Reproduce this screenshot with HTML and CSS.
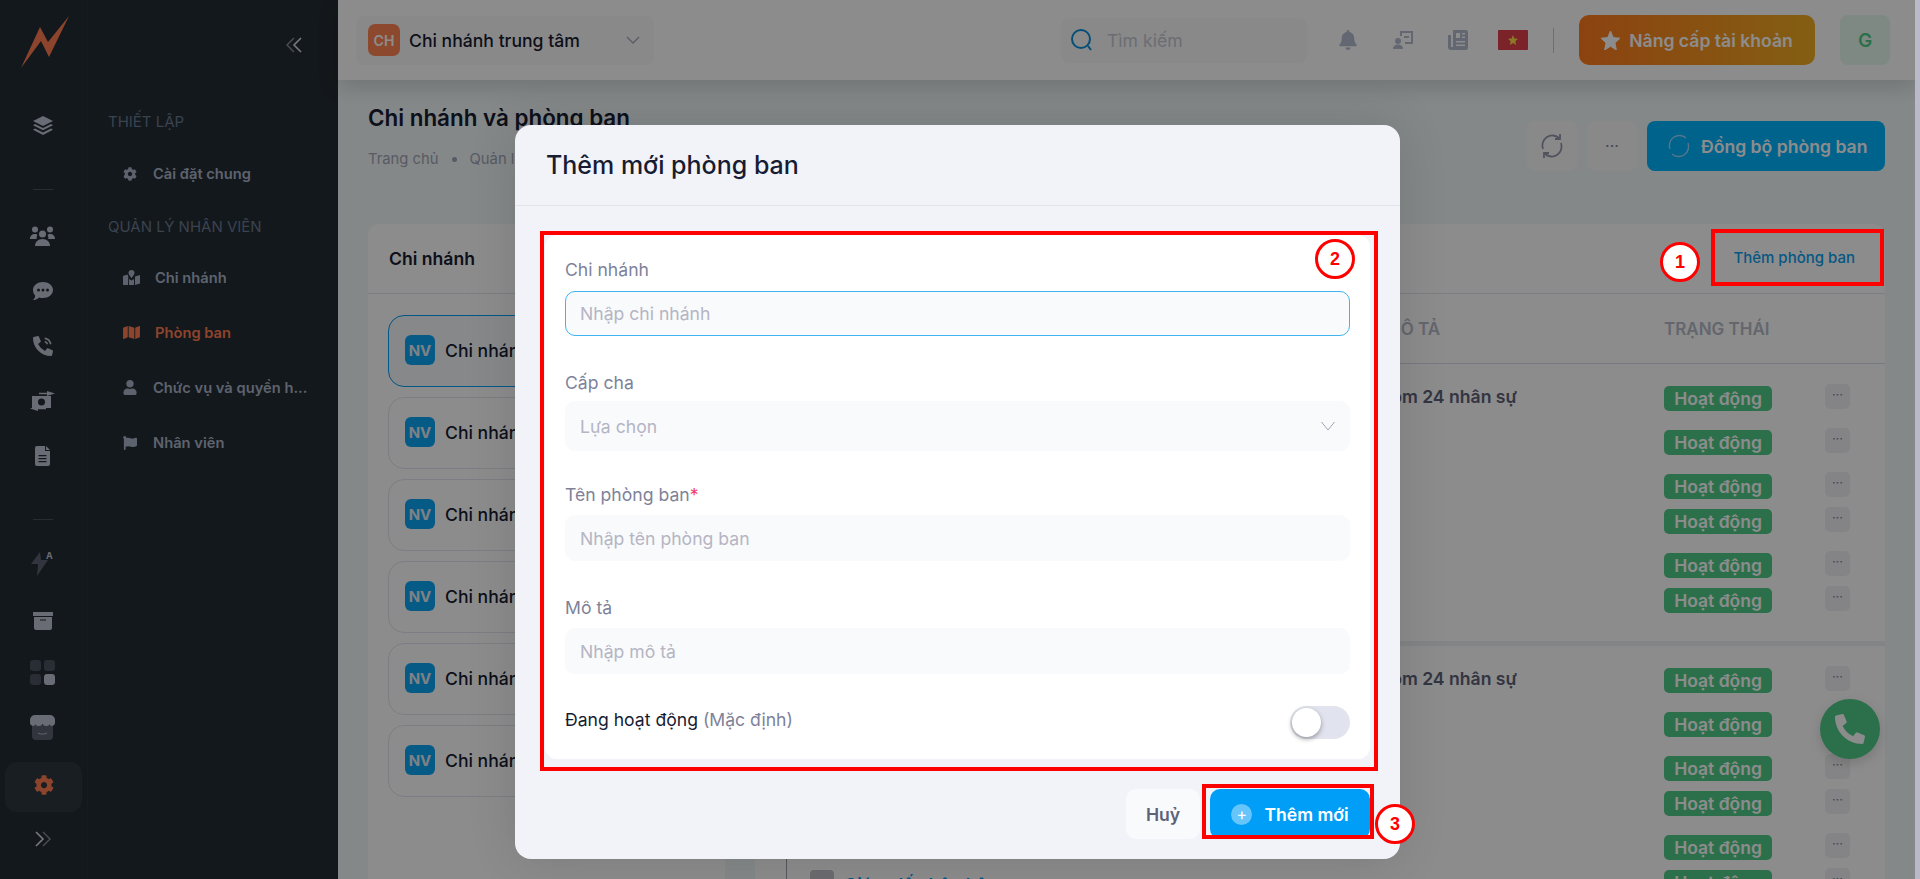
FILE: index.html
```html
<!DOCTYPE html>
<html lang="vi">
<head>
    <meta charset="UTF-8">
    <title>Chi nhánh và phòng ban</title>
    <link rel="stylesheet" href="styles.css">
</head>
<body>
<div class="app">
    <nav class="rail">
        <div class="rail-logo">
            <svg width="50" height="54" viewBox="20 15 50 54"><polygon points="21,68 40,27 48,42 69,16 49,57 41,41" fill="#ff7d52"/></svg>
        </div>
        <div class="rail-item"><svg width="20" height="20" viewBox="0 0 20 20"><path d="M10 0l10 5-10 5L0 5z"/><path d="M2 8l8 4 8-4 2 1.200-10 5-10-5z"/><path d="M2 12.500l8 4 8-4 2 1.200-10 5.300-10-5.300z"/></svg></div>
        <div class="rail-line"></div>
        <div class="rail-item"><svg width="25" height="20" viewBox="0 0 25 20"><circle cx="5" cy="3.500" r="3"/><circle cx="20" cy="3.500" r="3"/><circle cx="12.500" cy="8" r="3.500"/><path d="M0 13c0-3 2-5 5-5 1 0 2 .3 2.500 1-1 1.300-1 2.500-.8 4z"/><path d="M25 13c0-3-2-5-5-5-1 0-2 .3-2.500 1 1 1.300 1 2.500.8 4z"/><path d="M5 20c0-4 3-7 7.500-7s7.500 3 7.500 7z"/></svg></div>
        <div class="rail-item"><svg width="20" height="18" viewBox="0 0 20 18"><path fill-rule="evenodd" d="M10 0c5.500 0 10 3.500 10 8s-4.500 8-10 8c-1.400 0-2.700-.2-3.900-.6C4.700 16.800 2.500 18 0 18c1.400-1.200 2.200-2.900 2.300-4.300C.9 12.300 0 10.300 0 8c0-4.500 4.500-8 10-8zM5.500 6.500a1.500 1.500 0 100 3 1.500 1.500 0 000-3zm4.500 0a1.500 1.500 0 100 3 1.500 1.500 0 000-3zm4.500 0a1.500 1.500 0 100 3 1.500 1.500 0 000-3z"/></svg></div>
        <div class="rail-item"><svg width="20" height="20" viewBox="0 0 512 512"><path d="M497.390 361.800l-112-48a24 24 0 0 0-28 6.900l-49.600 60.600A370.660 370.660 0 0 1 130.600 204.110l60.600-49.600a23.940 23.940 0 0 0 6.900-28l-48-112A24.160 24.160 0 0 0 122.600.610l-104 24A24 24 0 0 0 0 48c0 256.500 207.900 464 464 464a24 24 0 0 0 23.400-18.600l24-104a24.290 24.290 0 0 0-14.010-27.600z"/><path d="M300 40c90 5 165 80 172 170h-42c-7-68-62-122-130-128zM300 125c45 5 82 40 87 85h-44c-4-20-22-38-43-42z"/></svg></div>
        <div class="rail-item"><svg width="25" height="20" viewBox="0 0 25 20"><path fill-rule="evenodd" d="M2 5h19v12H2zM11.500 7.500a3.500 3.500 0 100 7 3.500 3.500 0 000-7z"/><path d="M17 0l8 2.500-8 2.500V3.300H9V1.700h8zM8 15v1.700h8v1.600H8V20l-8-2.500z"/></svg></div>
        <div class="rail-item"><svg width="15" height="20" viewBox="0 0 15 20"><path fill-rule="evenodd" d="M2 0h8v5h5v13a2 2 0 01-2 2H2a2 2 0 01-2-2V2a2 2 0 012-2zM3.500 9v1.300h8V9zm0 3v1.300h8V12zm0 3v1.300h8V15z"/><path d="M11 0l4 4h-4z"/></svg></div>
        <div class="rail-line"></div>
        <div class="rail-item rail-item-bolt"><svg width="24" height="26" viewBox="0 0 24 26"><polygon points="9,2 0,14 7,14 6,26 17,10 10,10" fill="#5c6270"/><text x="15" y="9" class="rail-letter">A</text></svg></div>
        <div class="rail-item rail-item-archive"><svg width="20" height="18" viewBox="0 0 20 18"><rect width="20" height="4" rx=".5"/><path fill-rule="evenodd" d="M1 5h18v11a2 2 0 01-2 2H3a2 2 0 01-2-2zM7 7.500v1h6v-1z"/></svg></div>
        <div class="rail-item rail-item-grid"><svg width="25" height="25" viewBox="0 0 25 25"><rect width="11" height="11" rx="3" fill="#4c5260"/><rect x="14" width="11" height="11" rx="3" fill="#4c5260"/><rect y="14" width="11" height="11" rx="3" fill="#4c5260"/><rect x="14" y="14" width="11" height="11" rx="3"/></svg></div>
        <div class="rail-item rail-item-shop"><svg width="25" height="25" viewBox="0 0 25 25"><path d="M2 10h21v11a4 4 0 01-4 4H6a4 4 0 01-4-4z" fill="#5c6270"/><path d="M5 0h15a5 5 0 015 5v3a3 3 0 01-5.500 1.500A3.800 3.800 0 0116 11a3.800 3.800 0 01-3.500-2 3.800 3.800 0 01-3.500 2 3.800 3.800 0 01-3.500-1.500A3 3 0 010 8V5a5 5 0 015-5z"/><path d="M8 18c2.500 1.500 6.500 1.500 9 0" fill="none" stroke="#aeb4c4" stroke-width="1"/></svg></div>
        <div class="rail-item rail-item-active"><svg class="icon-orange" width="20" height="20" viewBox="0 0 512 512"><path d="M487.400 315.700l-42.600-24.600c4.300-23.200 4.300-47 0-70.200l42.600-24.600c4.900-2.800 7.100-8.600 5.500-14-11.100-35.600-30-67.800-54.700-94.600-3.800-4.100-10-5.100-14.800-2.300L380.800 110c-17.900-15.400-38.500-27.300-60.800-35.100V25.800c0-5.600-3.900-10.500-9.400-11.700-36.700-8.200-74.300-7.800-109.200 0-5.500 1.200-9.400 6.100-9.400 11.700V75c-22.200 7.900-42.800 19.800-60.800 35.100L88.700 85.500c-4.900-2.800-11-1.900-14.800 2.300-24.700 26.700-43.600 58.900-54.700 94.600-1.700 5.400.6 11.200 5.500 14L67.300 221c-4.300 23.200-4.300 47 0 70.200l-42.600 24.600c-4.900 2.800-7.100 8.600-5.500 14 11.100 35.600 30 67.800 54.700 94.600 3.800 4.100 10 5.100 14.800 2.300l42.600-24.600c17.900 15.400 38.500 27.300 60.800 35.100v49.200c0 5.600 3.900 10.500 9.400 11.700 36.700 8.200 74.300 7.800 109.200 0 5.500-1.200 9.400-6.100 9.400-11.700v-49.200c22.200-7.900 42.800-19.800 60.800-35.100l42.600 24.600c4.900 2.800 11 1.900 14.800-2.300 24.700-26.700 43.600-58.900 54.700-94.600 1.500-5.500-.7-11.300-5.600-14.100zM256 336c-44.100 0-80-35.900-80-80s35.900-80 80-80 80 35.900 80 80-35.900 80-80 80z"/></svg></div>
        <div class="rail-expand"><svg width="16" height="16" viewBox="0 0 16 16"><path d="M1 1l7 7-7 7" stroke="#d8dce6" stroke-width="1.600"/><path d="M8 1l7 7-7 7" stroke="#8a8f9a" stroke-width="1.400"/></svg></div>
    </nav>

    <aside class="submenu">
        <div class="submenu-collapse"><svg width="16" height="16" viewBox="0 0 16 16" fill="none"><path d="M8 1L1 8l7 7" stroke="#8a8f9a" stroke-width="1.400"/><path d="M15 1L8 8l7 7" stroke="#d8dce6" stroke-width="1.600"/></svg></div>
        <div class="submenu-title">THIẾT LẬP</div>
        <a class="submenu-item"><svg width="14" height="14" viewBox="0 0 512 512"><path d="M487.400 315.700l-42.600-24.600c4.300-23.200 4.300-47 0-70.200l42.600-24.600c4.900-2.800 7.100-8.600 5.500-14-11.100-35.600-30-67.800-54.700-94.600-3.800-4.100-10-5.100-14.800-2.300L380.800 110c-17.900-15.400-38.500-27.300-60.800-35.100V25.800c0-5.600-3.900-10.500-9.400-11.700-36.700-8.200-74.300-7.800-109.200 0-5.500 1.200-9.400 6.100-9.400 11.700V75c-22.200 7.900-42.800 19.800-60.800 35.100L88.700 85.500c-4.900-2.800-11-1.900-14.800 2.300-24.700 26.700-43.600 58.900-54.700 94.600-1.700 5.400.6 11.200 5.500 14L67.300 221c-4.300 23.200-4.300 47 0 70.200l-42.600 24.600c-4.900 2.800-7.100 8.600-5.500 14 11.100 35.600 30 67.800 54.700 94.600 3.800 4.100 10 5.100 14.800 2.300l42.600-24.600c17.900 15.400 38.500 27.300 60.800 35.100v49.200c0 5.600 3.900 10.500 9.400 11.700 36.700 8.200 74.300 7.800 109.200 0 5.500-1.200 9.400-6.100 9.400-11.700v-49.200c22.200-7.900 42.800-19.800 60.800-35.100l42.600 24.600c4.900 2.800 11 1.900 14.800-2.300 24.700-26.700 43.600-58.900 54.700-94.600 1.500-5.500-.7-11.300-5.600-14.100zM256 336c-44.100 0-80-35.900-80-80s35.900-80 80-80 80 35.900 80 80-35.900 80-80 80z"/></svg>Cài đặt chung</a>
        <div class="submenu-title submenu-title-second">QUẢN LÝ NHÂN VIÊN</div>
        <a class="submenu-item submenu-item-wide"><svg width="17" height="15" viewBox="0 0 17 15"><path d="M8.500 0a3 3 0 013 3c0 1.500-2 4-3 5.200C7.500 7 5.500 4.500 5.500 3a3 3 0 013-3z"/><path d="M0 6l4.500-1.500.8 2L5 15l-5 0zM6 9l2.500 1.500L11 9v6H6zM12 6.500l5-1.500v8.500L12 15z"/></svg>Chi nhánh</a>
        <a class="submenu-item submenu-item-wide submenu-item-active"><svg width="17" height="15" viewBox="0 0 576 512"><path d="M0 117.660v346.320c0 11.320 11.430 19.060 21.940 14.860L160 416V32L20.120 87.950A32.006 32.006 0 0 0 0 117.660zM192 416l192 64V96L192 32v384zM554.060 33.160L416 96v384l139.880-55.950A31.996 31.996 0 0 0 576 394.340V48.020c0-11.320-11.430-19.060-21.940-14.860z"/></svg>Phòng ban</a>
        <a class="submenu-item"><svg width="14" height="15" viewBox="0 0 448 512"><path d="M224 256c70.700 0 128-57.300 128-128S294.700 0 224 0 96 57.300 96 128s57.300 128 128 128zm89.600 32h-16.700c-22.200 10.200-46.900 16-72.900 16s-50.600-5.800-72.900-16h-16.700C60.200 288 0 348.200 0 422.400V464c0 26.500 21.500 48 48 48h352c26.500 0 48-21.500 48-48v-41.600c0-74.200-60.200-134.400-134.400-134.400z"/></svg>Chức vụ và quyền h...</a>
        <a class="submenu-item"><svg width="14" height="14" viewBox="0 0 512 512"><path d="M349.565 98.783C295.978 98.783 251.721 64 184.348 64c-24.955 0-47.309 4.384-68.045 12.013a55.947 55.947 0 0 0 3.586-23.562C118.117 24.015 94.806 1.206 66.338.048 34.345-1.254 8 24.296 8 56c0 19.026 9.497 35.825 24 45.945V488c0 13.255 10.745 24 24 24h16c13.255 0 24-10.745 24-24v-94.400c28.311-12.064 63.582-22.122 114.435-22.122 53.588 0 97.844 34.783 165.217 34.783 48.169 0 86.667-16.294 122.505-40.858C506.840 359.452 512 349.571 512 339.045v-243.100c0-23.393-24.269-38.870-45.485-29.016-34.338 15.948-76.454 31.854-116.950 31.854z"/></svg>Nhân viên</a>
    </aside>

    <div class="page">
        <header class="topbar">
            <div class="branch-select">
                <span class="branch-logo">CH</span>
                <span class="branch-name">Chi nhánh trung tâm</span>
                <svg class="branch-caret" width="14" height="8" viewBox="0 0 14 8" fill="none"><path d="M1 1l6 6 6-6" stroke="#a1a5b7" stroke-width="1.300"/></svg>
            </div>
            <div class="search">
                <svg width="24" height="24" viewBox="0 0 24 24" fill="none"><circle cx="11" cy="11" r="9" stroke="#0d8fd8" stroke-width="2"/><path d="M18 18l3 4" stroke="#0d8fd8" stroke-width="2"/></svg>
                <span>Tìm kiếm</span>
            </div>
            <span class="top-icon"><svg width="18" height="20" viewBox="0 0 448 512"><path d="M224 512c35.320 0 63.970-28.650 63.970-64H160.030c0 35.350 28.650 64 63.970 64zm215.390-149.710c-19.320-20.760-55.470-51.990-55.470-154.290 0-77.700-54.480-139.900-127.940-155.160V32c0-17.670-14.320-32-31.980-32s-31.980 14.330-31.980 32v20.840C118.560 68.100 64.080 130.300 64.080 208c0 102.300-36.150 133.530-55.470 154.290-6 6.450-8.660 14.160-8.610 21.710.11 16.400 12.980 32 32.100 32h383.800c19.120 0 32-15.600 32.100-32 .05-7.550-2.610-15.270-8.610-21.710z"/></svg></span>
            <span class="top-icon"><svg width="20" height="18" viewBox="0 0 20 18"><path fill-rule="evenodd" d="M7 0h13v13h-8v-2h6V2H9v3H7z"/><circle cx="5" cy="10" r="3"/><path d="M0 18c0-3 2-4.500 5-4.500s5 1.500 5 4.500zM11 5h5v2h-5z"/></svg></span>
            <span class="top-icon"><svg width="20" height="20" viewBox="0 0 20 20"><path fill-rule="evenodd" d="M5 0h13a2 2 0 012 2v16a2 2 0 01-2 2H3a3 3 0 01-3-3V5h3v12h2zM8 3v5h4V3zm6 0v1.500h3V3zm0 3.500V8h3V6.500zM8 11v1.500h9V11zm0 3.500V16h9v-1.500z"/></svg></span>
            <span class="flag"><svg width="10" height="10" viewBox="0 0 20 20"><polygon points="10,0 12.900,6.900 20,7.600 14.700,12.500 16.200,20 10,16.100 3.800,20 5.300,12.500 0,7.600 7.100,6.900" fill="#ffda44"/></svg></span>
            <span class="top-divider"></span>
            <button class="upgrade-btn"><svg width="19" height="19" viewBox="0 0 20 20"><polygon points="10,0 12.900,6.900 20,7.600 14.700,12.500 16.200,20 10,16.100 3.800,20 5.300,12.500 0,7.600 7.100,6.900" fill="#fff" stroke="#fff" stroke-linejoin="round"/></svg>Nâng cấp tài khoản</button>
            <span class="user-avatar">G</span>
        </header>

        <main class="content">
            <div class="toolbar">
                <div>
                    <h1 class="page-title">Chi nhánh và phòng ban</h1>
                    <div class="crumbs"><span>Trang chủ</span><i></i><span>Quản lý nhân viên</span></div>
                </div>
                <div class="toolbar-actions">
                    <button class="square-btn"><svg width="24" height="26" viewBox="0 0 24 26" fill="none" stroke="#9297ab" stroke-width="1.800"><path d="M3 16A10 10 0 0 1 19 5"/><path d="M21 10A10 10 0 0 1 5 21"/><path d="M15 6l5 0 0-5M9 20l-5 0 0 5"/></svg></button>
                    <button class="square-btn"><span class="dots">···</span></button>
                    <button class="sync-btn"><svg width="24" height="26" viewBox="0 0 24 26" fill="none" stroke="#9ad8ff" stroke-width="1.400"><path d="M3 16A10 10 0 0 1 19 5"/><path d="M21 10A10 10 0 0 1 5 21"/></svg>Đồng bộ phòng ban</button>
                </div>
            </div>

            <div class="columns">
                <section class="branch-card">
                    <div class="branch-card-head">Chi nhánh</div>
                    <div class="branch-list">
                        <div class="branch-item branch-item-active"><span class="nv">NV</span>Chi nhánh Hà Nội</div>
                        <div class="branch-item"><span class="nv">NV</span>Chi nhánh Hải Phòng</div>
                        <div class="branch-item"><span class="nv">NV</span>Chi nhánh Đà Nẵng</div>
                        <div class="branch-item"><span class="nv">NV</span>Chi nhánh Huế</div>
                        <div class="branch-item"><span class="nv">NV</span>Chi nhánh Cần Thơ</div>
                        <div class="branch-item"><span class="nv">NV</span>Chi nhánh Sài Gòn</div>
                    </div>
                </section>

                <section class="dept-card">
                    <div class="dept-card-head"><a class="add-dept">Thêm phòng ban</a></div>
                    <div class="dept-row dept-head">
                        <span>TÊN PHÒNG BAN</span><span class="head-desc">MÔ TẢ</span><span>TRẠNG THÁI</span>
                    </div>
                    <div class="dept-group">
                        <div class="dept-row"><span></span><span class="desc">Gồm 24 nhân sự</span><span class="badge">Hoạt động</span><span class="more">···</span></div>
                        <div class="dept-row"><span></span><span></span><span class="badge">Hoạt động</span><span class="more">···</span></div>
                        <div class="dept-row dept-row-tight"><span></span><span></span><span class="badge">Hoạt động</span><span class="more">···</span></div>
                        <div class="dept-row"><span></span><span></span><span class="badge">Hoạt động</span><span class="more">···</span></div>
                        <div class="dept-row dept-row-tight"><span></span><span></span><span class="badge">Hoạt động</span><span class="more">···</span></div>
                        <div class="dept-row"><span></span><span></span><span class="badge">Hoạt động</span><span class="more">···</span></div>
                    </div>
                    <div class="dept-group">
                        <div class="dept-row"><span></span><span class="desc">Gồm 24 nhân sự</span><span class="badge">Hoạt động</span><span class="more">···</span></div>
                        <div class="dept-row"><span></span><span></span><span class="badge">Hoạt động</span><span class="more">···</span></div>
                        <div class="dept-row dept-row-tight"><span></span><span></span><span class="badge">Hoạt động</span><span class="more">···</span></div>
                        <div class="dept-row"><span></span><span></span><span class="badge">Hoạt động</span><span class="more">···</span></div>
                        <div class="dept-row dept-row-tight"><span></span><span></span><span class="badge">Hoạt động</span><span class="more">···</span></div>
                        <div class="dept-row"><span class="tree-node"><i></i>Giám đốc bộ phận</span><span></span><span class="badge">Hoạt động</span><span class="more">···</span></div>
                    </div>
                </section>
            </div>
        </main>

        <a class="call-fab"><svg width="30" height="30" viewBox="0 0 512 512"><path d="M497.390 361.800l-112-48a24 24 0 0 0-28 6.900l-49.600 60.600A370.660 370.660 0 0 1 130.600 204.110l60.600-49.600a23.940 23.940 0 0 0 6.900-28l-48-112A24.160 24.160 0 0 0 122.600.610l-104 24A24 24 0 0 0 0 48c0 256.500 207.900 464 464 464a24 24 0 0 0 23.400-18.600l24-104a24.290 24.290 0 0 0-14.010-27.600z"/></svg></a>
    </div>
    <div class="scroll-strip"></div>
</div>

<div class="overlay">
    <div class="modal">
        <div class="modal-head">Thêm mới phòng ban</div>
        <div class="modal-body">
            <form class="modal-form">
                <div class="field">
                    <label>Chi nhánh</label>
                    <input class="input input-focus" type="text" placeholder="Nhập chi nhánh">
                </div>
                <div class="field">
                    <label>Cấp cha</label>
                    <div class="input select">Lựa chọn<svg width="14" height="10" viewBox="0 0 14 10" fill="none"><path d="M.5 1L7 9l6.500-8" stroke="#a1a5b7"/></svg></div>
                </div>
                <div class="field">
                    <label>Tên phòng ban<b>*</b></label>
                    <input class="input" type="text" placeholder="Nhập tên phòng ban">
                </div>
                <div class="field">
                    <label>Mô tả</label>
                    <input class="input" type="text" placeholder="Nhập mô tả">
                </div>
                <div class="toggle-row">
                    <span class="toggle-text">Đang hoạt động <em>(Mặc định)</em></span>
                    <span class="toggle"><i></i></span>
                </div>
            </form>
        </div>
        <div class="modal-foot">
            <button class="btn-cancel">Huỷ</button>
            <button class="btn-add"><span class="plus">+</span>Thêm mới</button>
        </div>
    </div>
</div>

<div class="marker marker-box box-one"></div>
<div class="marker marker-box box-two"></div>
<div class="marker marker-box box-three"></div>
<div class="marker marker-num num-one">1</div>
<div class="marker marker-num num-two">2</div>
<div class="marker marker-num num-three">3</div>
</body>
</html>
```

FILE: styles.css
```css
* {
    box-sizing: border-box;
}
html, body {
    margin: 0;
    height: 100%;
    overflow: hidden;
}
body {
    font-family: 'Inter', 'Noto Sans', sans-serif;
    font-size: 14px;
    color: #181c32;
    background: #f2f8f8;
}
button {
    font-family: inherit;
    border: none;
    cursor: pointer;
}
.app {
    display: flex;
    height: 100vh;
}

/* rail */
.rail {
    width: 88px;
    flex: none;
    background: #242c33;
    border-right: 1px solid #2a3239;
    position: relative;
}
.rail svg {
    fill: #bfc5d4;
    display: block;
}
.rail-logo {
    height: 98px;
    padding: 15px 0 0 20px;
}
.rail-item {
    height: 55px;
    display: flex;
    align-items: center;
    justify-content: center;
    padding-right: 2px;
}
.rail-line {
    width: 20px;
    height: 1px;
    background: #4a535c;
    margin: 36px 0 18px 33px;
}
.rail-letter {
    font-size: 9px;
    font-weight: 700;
    fill: #bfc5d4;
}
.rail-item-bolt {
    margin-top: -3px;
}
.rail-item-archive {
    margin-top: 3px;
    margin-bottom: -3px;
}
.rail-item-active {
    width: 77px;
    height: 50px;
    margin: 7px 0 0 5px;
    padding: 0 0 4px;
    background: #2f373f;
    border-radius: 12px;
}
.rail .icon-orange {
    fill: #ff7d52;
}
.rail-expand {
    margin: 19px 0 0 35px;
}
.rail .rail-expand svg {
    fill: none;
}

/* submenu */
.submenu {
    width: 250px;
    flex: none;
    background: #242c33;
    padding-left: 20px;
    position: relative;
}
.submenu-collapse {
    position: absolute;
    left: 198px;
    top: 37px;
}
.submenu-title {
    color: #6a7a90;
    font-size: 15px;
    line-height: 18px;
    margin-top: 113px;
}
.submenu-title-second {
    margin-top: 17px;
    margin-bottom: -1px;
}
.submenu-item {
    height: 55px;
    display: flex;
    align-items: center;
    gap: 16px;
    padding-left: 15px;
    color: #aab4c8;
    font-size: 14.700px;
    font-weight: 600;
    white-space: nowrap;
}
.submenu-item svg {
    fill: #aab4c8;
    flex: none;
}
.submenu-item-wide {
    gap: 15px;
}
.submenu-item-active {
    color: #ff7d52;
}
.submenu-item-active svg {
    fill: #ff7d52;
}
.submenu-title + .submenu-item {
    margin-top: 15px;
}

/* page */
.page {
    flex: 1;
    min-width: 0;
    position: relative;
    background: #f2f8f8;
}
.scroll-strip {
    width: 5px;
    flex: none;
    background: #b9b9c9;
    position: relative;
    z-index: 30;
}
.topbar {
    height: 80px;
    background: #fff;
    display: flex;
    align-items: center;
    padding: 0 25px 0 18px;
    box-shadow: 0 8px 20px rgba(0, 0, 0, .14);
    position: relative;
}
.branch-select {
    width: 298px;
    height: 49px;
    display: flex;
    align-items: center;
    padding: 0 14px 0 12px;
    background: #fafafa;
    border-radius: 8px;
    margin-right: auto;
}
.branch-logo {
    width: 32px;
    height: 32px;
    display: flex;
    align-items: center;
    justify-content: center;
    background: #ff8555;
    color: #fff;
    border-radius: 7px;
    font-size: 14px;
    font-weight: 600;
}
.branch-name {
    margin-left: 9px;
    font-size: 17.600px;
    font-weight: 500;
    white-space: nowrap;
}
.branch-caret {
    margin-left: auto;
}
.search {
    width: 246px;
    height: 45px;
    background: #fafafa;
    border-radius: 8px;
    display: flex;
    align-items: center;
    gap: 13px;
    padding-left: 9px;
    color: #c4c7d2;
    font-size: 17.600px;
    margin-right: 26px;
}
.top-icon {
    width: 30px;
    display: flex;
    justify-content: center;
    margin-right: 25px;
}
.top-icon svg {
    fill: #b5bccf;
}
.flag {
    width: 30px;
    height: 20px;
    background: #e0404a;
    border-radius: 1px;
    display: flex;
    align-items: center;
    justify-content: center;
}
.top-divider {
    width: 1px;
    height: 25px;
    background: #c9cbd2;
    margin: 0 25px;
}
.upgrade-btn {
    width: 236px;
    height: 50px;
    display: flex;
    align-items: center;
    justify-content: center;
    gap: 9px;
    color: #fff;
    font-size: 17.600px;
    font-weight: 600;
    border-radius: 10px;
    background: linear-gradient(90deg, #ff7a1e, #f0ac22);
    margin-right: 25px;
    white-space: nowrap;
}
.user-avatar {
    width: 50px;
    height: 50px;
    display: flex;
    align-items: center;
    justify-content: center;
    background: #e8f9ee;
    color: #50cd89;
    font-size: 19px;
    font-weight: 600;
    border-radius: 8px;
}

/* content */
.content {
    padding: 24px 30px 0;
}
.toolbar {
    height: 67px;
    display: flex;
    justify-content: space-between;
}
.page-title {
    margin: 0;
    font-size: 22.400px;
    line-height: 28px;
    font-weight: 600;
    color: #181c32;
}
.crumbs {
    margin-top: 18px;
    display: flex;
    align-items: center;
    gap: 13px;
    font-size: 14.800px;
    color: #a1a5b7;
}
.crumbs i {
    width: 5px;
    height: 5px;
    border-radius: 50%;
    background: #a1a5b7;
}
.toolbar-actions {
    align-self: flex-end;
    display: flex;
    gap: 10px;
}
.square-btn {
    width: 50px;
    height: 50px;
    background: #fafafa;
    border-radius: 8px;
    display: flex;
    align-items: center;
    justify-content: center;
}
.dots {
    color: #7e8299;
    font-size: 16px;
}
.sync-btn {
    width: 238px;
    height: 50px;
    display: flex;
    align-items: center;
    gap: 10px;
    padding-left: 20px;
    background: #00b4ff;
    color: #fff;
    font-size: 17.600px;
    font-weight: 600;
    border-radius: 8px;
    white-space: nowrap;
}
.columns {
    margin-top: 53px;
    display: flex;
    gap: 30px;
}
.branch-card {
    width: 357px;
    flex: none;
    height: 800px;
    background: #fff;
    border-radius: 12px 12px 0 0;
}
.branch-card-head {
    height: 70px;
    display: flex;
    align-items: center;
    padding-left: 21px;
    font-size: 17.600px;
    font-weight: 600;
    border-bottom: 1px solid #e4e6ef;
}
.branch-list {
    padding: 21px 20px;
    display: flex;
    flex-direction: column;
    gap: 10px;
}
.branch-item {
    height: 72px;
    display: flex;
    align-items: center;
    gap: 10px;
    padding-left: 16px;
    padding-bottom: 2px;
    border: 1px solid #e4e6ef;
    border-radius: 16px;
    font-size: 17.600px;
    font-weight: 500;
    white-space: nowrap;
    overflow: hidden;
}
.branch-item-active {
    border-color: #009ef7;
    background: #f5f8fc;
}
.nv {
    width: 30px;
    height: 30px;
    flex: none;
    display: flex;
    align-items: center;
    justify-content: center;
    background: #0ba4f5;
    color: #e6edf2;
    border-radius: 6px;
    font-size: 15px;
    font-weight: 700;
}
.dept-card {
    flex: 1;
    min-width: 0;
    height: 800px;
    background: #fff;
    border-radius: 12px 12px 0 0;
}
.dept-card-head {
    height: 70px;
    display: flex;
    align-items: center;
    justify-content: flex-end;
    padding: 0 30px 2px 0;
    border-bottom: 1px solid #e4e6ef;
}
.add-dept {
    color: #0b9ff0;
    font-size: 15px;
    font-weight: 500;
}
.dept-row {
    height: 44px;
    display: grid;
    grid-template-columns: 623px 286px 161px 25px;
    align-items: start;
}
.dept-row-tight {
    height: 35px;
}
.dept-head {
    height: 70px;
    align-items: center;
    font-size: 17px;
    font-weight: 600;
    color: #b6bac8;
    border-bottom: 1px solid #d8dde6;
}
.head-desc {
    margin-left: 7px;
}
.dept-group {
    height: 282px;
    padding-top: 22px;
    border-bottom: 5px solid #eef1f3;
}
.desc {
    color: #5e6278;
    font-size: 17.600px;
    font-weight: 600;
    line-height: 22px;
    white-space: nowrap;
}
.badge {
    width: 108px;
    height: 25px;
    display: flex;
    align-items: center;
    justify-content: center;
    background: #50cd89;
    color: #fff;
    border-radius: 5px;
    font-size: 17.500px;
    font-weight: 600;
}
.more {
    width: 25px;
    height: 25px;
    margin-top: -2px;
    background: #f1f1f4;
    color: #7e8299;
    border-radius: 5px;
    text-align: center;
    line-height: 20px;
    font-size: 13px;
}
.tree-node {
    margin-left: 31px;
    height: 50px;
    margin-top: -12px;
    padding: 12px 0 0 23px;
    border-left: 1px solid #9ca0a8;
    display: flex;
    align-items: flex-start;
    gap: 10px;
    color: #009ef7;
    font-size: 17.600px;
    font-weight: 600;
    line-height: 30px;
    white-space: nowrap;
}
.tree-node i {
    width: 24px;
    height: 24px;
    border-radius: 4px;
    background: #c4c4cc;
}
.call-fab {
    position: absolute;
    left: 1482px;
    top: 699px;
    width: 60px;
    height: 60px;
    border-radius: 50%;
    background: #50cd89;
    display: flex;
    align-items: center;
    justify-content: center;
    box-shadow: 0 4px 12px rgba(0, 0, 0, .15);
}
.call-fab path {
    fill: #fff;
}

/* modal */
.overlay {
    position: absolute;
    inset: 0 5px 0 0;
    background: rgba(0, 0, 0, .45);
    display: flex;
    justify-content: center;
    padding-top: 125px;
    z-index: 10;
}
.modal {
    width: 885px;
    height: 734px;
    background: #f1f3f8;
    border-radius: 16px;
    box-shadow: 0 0 50px rgba(0, 0, 0, .12);
}
.modal-head {
    height: 81px;
    display: flex;
    align-items: center;
    padding-left: 31px;
    font-size: 25px;
    font-weight: 500;
    border-bottom: 1px solid #e4e6ef;
}
.modal-body {
    padding: 29px 30px 0;
}
.modal-form {
    height: 524px;
    background: #fff;
    border-radius: 12px;
    padding: 23px 20px 0;
}
.field {
    margin-bottom: 35px;
}
.field:nth-child(even) {
    margin-bottom: 32px;
}
.field label {
    display: block;
    height: 24px;
    line-height: 24px;
    margin-bottom: 8px;
    font-size: 17.600px;
    color: #7e8299;
}
.field label b {
    color: #f1416c;
    font-weight: 400;
}
.input {
    display: block;
    width: 100%;
    height: 46px;
    padding: 0 14px;
    background: #f9fafc;
    border: 1px solid #f9fafc;
    border-radius: 10px;
    font-family: inherit;
    font-size: 17.600px;
    outline: none;
}
.input::placeholder {
    color: #b5b5c3;
}
.input-focus {
    height: 45px;
    margin-top: 9px;
    border-color: #3fb4f0;
}
.select {
    height: 50px;
    margin-top: -2px;
    display: flex;
    align-items: center;
    justify-content: space-between;
    color: #b5b5c3;
}
.toggle-row {
    display: flex;
    align-items: center;
    justify-content: space-between;
    font-size: 17.600px;
}
.toggle-text {
    padding-bottom: 6px;
}
.toggle-row em {
    font-style: normal;
    color: #7e8299;
}
.toggle {
    width: 60px;
    height: 33px;
    background: #e1e4ee;
    border-radius: 17px;
    padding: 2px;
}
.toggle i {
    display: block;
    width: 29px;
    height: 29px;
    background: #fff;
    border-radius: 50%;
    box-shadow: 0 2px 5px rgba(0, 0, 0, .35);
}
.modal-foot {
    display: flex;
    justify-content: flex-end;
    gap: 10px;
    padding: 30px 30px 0;
}
.btn-cancel {
    width: 74px;
    height: 50px;
    background: #f9fafc;
    color: #5e6278;
    border-radius: 10px;
    font-size: 17.600px;
    font-weight: 600;
}
.btn-add {
    width: 160px;
    height: 50px;
    display: flex;
    align-items: center;
    justify-content: center;
    gap: 12px;
    background: #009ef7;
    color: #fff;
    border-radius: 10px;
    font-size: 17.600px;
    font-weight: 600;
}
.plus {
    width: 21px;
    height: 21px;
    border-radius: 50%;
    background: rgba(255, 255, 255, .4);
    display: flex;
    align-items: center;
    justify-content: center;
    font-weight: 400;
    font-size: 16px;
}

/* red guide marks on top of the capture */
.marker {
    position: absolute;
    z-index: 20;
}
.marker-box {
    border: 4px solid #ff0000;
}
.box-one {
    left: 1711px;
    top: 229px;
    width: 173px;
    height: 57px;
}
.box-two {
    left: 540px;
    top: 231px;
    width: 838px;
    height: 540px;
}
.box-three {
    left: 1202px;
    top: 784px;
    width: 172px;
    height: 55px;
}
.marker-num {
    width: 40px;
    height: 40px;
    border: 3px solid #ff0000;
    border-radius: 50%;
    background: #fff;
    color: #ff0000;
    font-family: 'Liberation Sans', sans-serif;
    font-size: 18px;
    font-weight: 700;
    display: flex;
    align-items: center;
    justify-content: center;
}
.num-one {
    left: 1660px;
    top: 242px;
}
.num-two {
    left: 1315px;
    top: 239px;
}
.num-three {
    left: 1375px;
    top: 804px;
}
```
